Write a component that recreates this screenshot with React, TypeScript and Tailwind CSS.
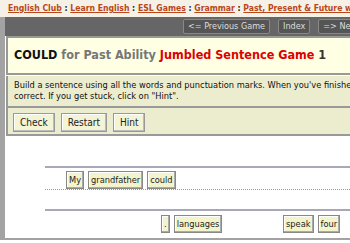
import React from "react";

const font = { fontFamily: '"DejaVu Sans Condensed", "DejaVu Sans", Verdana, sans-serif' };

function Tile({ children }: { children: React.ReactNode }) {
  return (
    <span className="inline-flex h-[18px] items-center border border-[#888] bg-[#f4f4cc] px-[2px] text-[9.2px] leading-none text-[#222] shadow-[inset_-1px_-1px_0_#aaa,inset_1px_1px_0_#fff]">
      {children}
    </span>
  );
}

function Btn({ children }: { children: React.ReactNode }) {
  return (
    <span className="inline-flex h-[19px] items-center border border-[#999] bg-[#f3f3d6] px-[6px] text-[10px] text-[#222] shadow-[inset_-1px_-1px_0_#bbb,inset_1px_1px_0_#fff]">
      {children}
    </span>
  );
}

function TopBtn({ children }: { children: React.ReactNode }) {
  return (
    <span className="inline-flex h-[15px] items-center whitespace-nowrap rounded-[2px] border border-[#888] bg-[#555] px-[4px] text-[9px] text-[#ddd]">
      {children}
    </span>
  );
}

export default function App() {
  const link = "text-[#b9471b] underline font-bold";
  return (
    <div style={font} className="h-[243px] w-[350px] overflow-hidden bg-white">
      <div className="flex h-[17px] items-center whitespace-pre bg-[#f6f1e7] pl-[8px] text-[8.6px] text-[#222]">
        <span className={link}>English Club</span>
        <b> : </b>
        <span className={link}>Learn English</span>
        <b> : </b>
        <span className={link}>ESL Games</span>
        <b> : </b>
        <span className={link}>Grammar</span>
        <b> : </b>
        <span className={link}>Past, Present &amp; Future with Modals</span>
      </div>
      <div className="h-[223px] border-b-[3px] border-l-[5px] border-[#a3a3a3]">
        <div className="flex h-[19px] items-center gap-[8px] whitespace-nowrap bg-[#666] pl-[178px]">
          <TopBtn>&lt;= Previous Game</TopBtn>
          <TopBtn>Index</TopBtn>
          <TopBtn>=&gt; Next Game</TopBtn>
        </div>
        <div className="ml-[1px] flex h-[39px] items-center whitespace-nowrap border-2 border-r-0 border-[#999] bg-[#ffffe3] pl-[6px] text-[12.5px] font-bold">
          <span className="text-[#111]">COULD</span>
          <span className="text-[#777]">&nbsp;for Past Ability</span>
          <span className="text-[#d00]">&nbsp;Jumbled Sentence Game</span>
          <span className="text-[#333]">&nbsp;1</span>
        </div>
        <div className="ml-[1px] mt-[1px] border-l-2 border-[#999] bg-[#ececcf]">
          <div className="h-[30px] whitespace-nowrap pl-[6px] pt-[3px] text-[9.2px] leading-[11px] text-[#111]">
            Build a sentence using all the words and punctuation marks. When you've finished, click "Check" to see if it is
            <br />
            correct. If you get stuck, click on "Hint".
          </div>
          <div className="h-[2px] bg-[#999]" />
          <div className="flex h-[26px] items-center gap-[6px] pl-[5px] pt-[2px]">
            <Btn>Check</Btn>
            <Btn>Restart</Btn>
            <Btn>Hint</Btn>
          </div>
          <div className="h-[2px] bg-[#999]" />
        </div>
        <div className="relative h-[102px] bg-white">
          <div className="absolute left-[40px] right-0 top-[30px] h-[2px] bg-[#a8a8b8]" />
          <div className="absolute left-[61px] top-[35px] flex gap-[4px]">
            <Tile>My</Tile>
            <Tile>grandfather</Tile>
            <Tile>could</Tile>
          </div>
          <div className="absolute left-[40px] right-0 top-[53px] border-t border-dotted border-[#999]" />
          <div className="absolute left-[40px] right-0 top-[73px] h-[2px] bg-[#a8a8b8]" />
          <div className="absolute left-[156px] top-[79px] flex gap-[4px]">
            <Tile>.</Tile>
            <Tile>languages</Tile>
          </div>
          <div className="absolute left-[278px] top-[79px] flex gap-[4px]">
            <Tile>speak</Tile>
            <Tile>four</Tile>
          </div>
        </div>
      </div>
    </div>
  );
}
